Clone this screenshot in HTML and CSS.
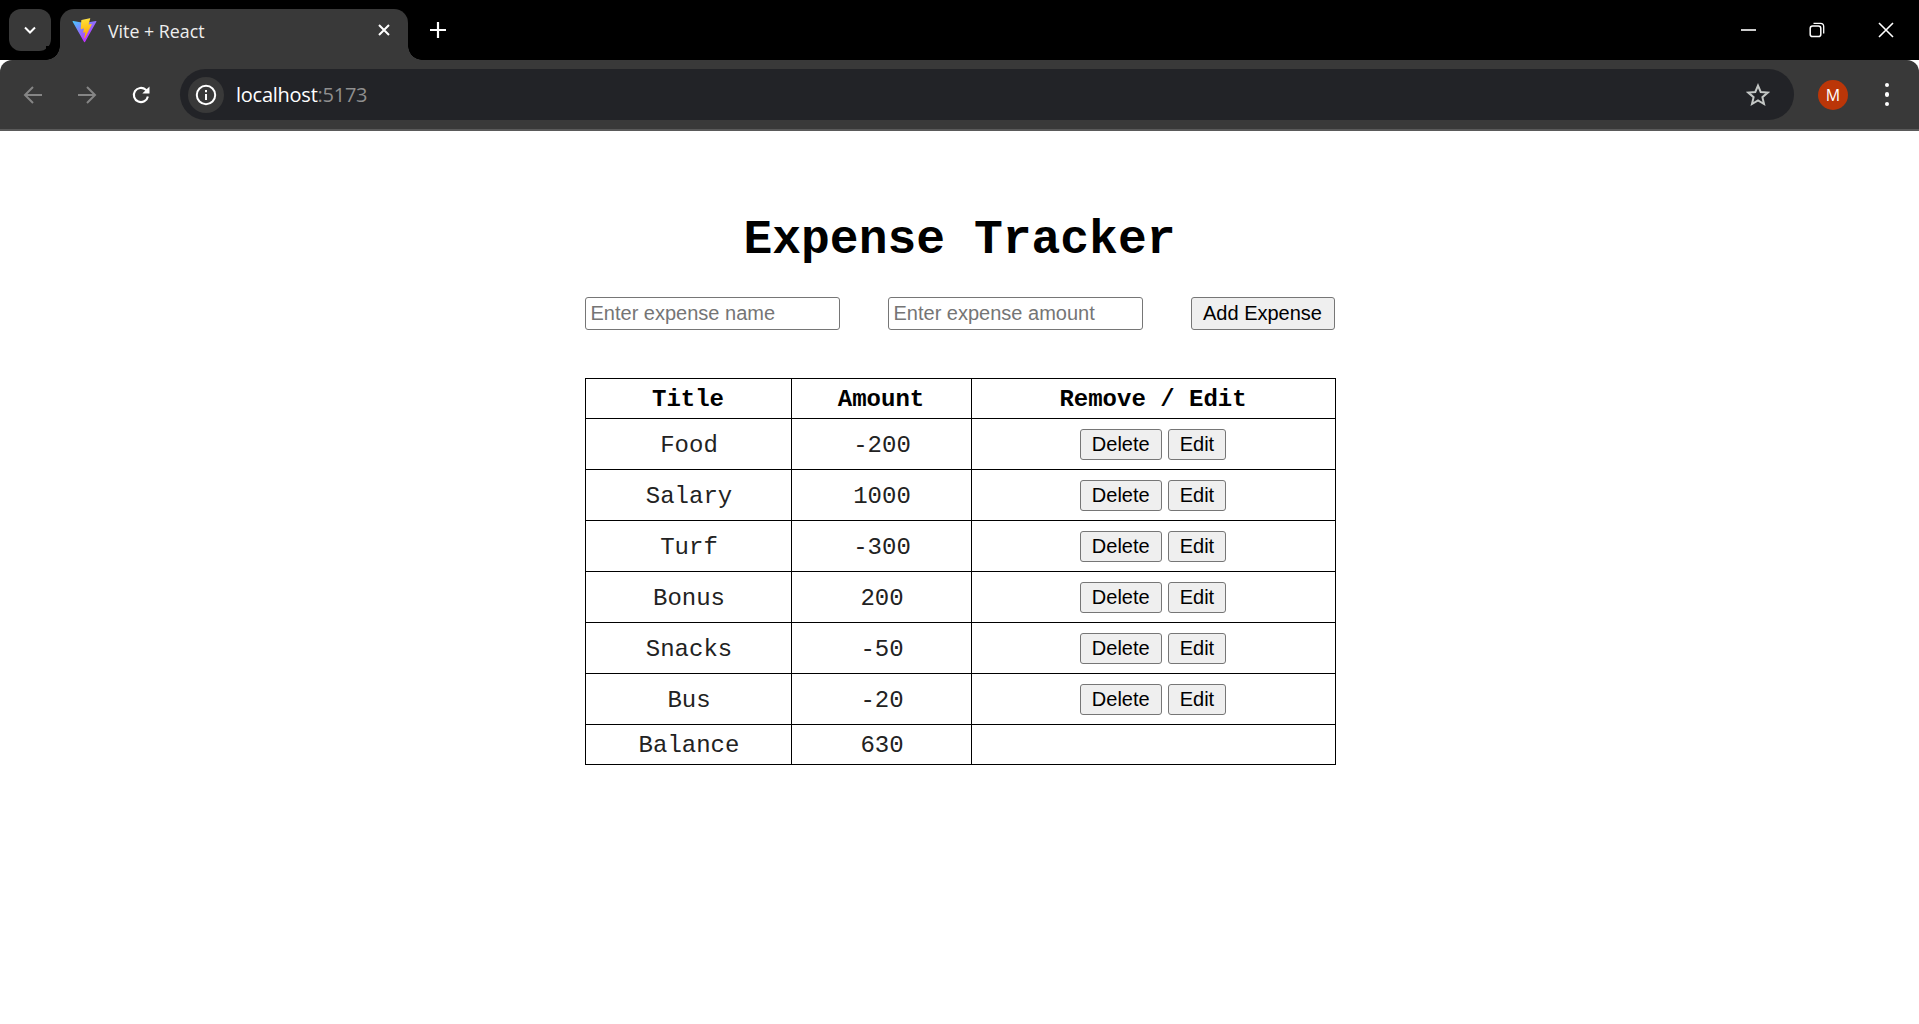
FILE: index.html
```
<!DOCTYPE html>
<html lang="en">
<head>
<meta charset="utf-8">
<title>Vite + React</title>
<link rel="stylesheet" href="styles.css">
</head>
<body>
<header class="browser">
  <div class="tabstrip">
    <div class="tabsearch">
      <svg width="14" height="14" viewBox="0 0 14 14"><path d="M2 4.5 7 9.5 12 4.5" fill="none" stroke="#fff" stroke-width="2"/></svg>
    </div>
    <div class="tab">
      <svg class="favicon" width="25" height="25" viewBox="0 0 410 404">
        <defs>
          <linearGradient id="vg1" x1="6" y1="33" x2="235" y2="344" gradientUnits="userSpaceOnUse"><stop offset="0" stop-color="#41D1FF"/><stop offset="1" stop-color="#BD34FE"/></linearGradient>
          <linearGradient id="vg2" x1="194" y1="8" x2="236" y2="293" gradientUnits="userSpaceOnUse"><stop offset="0" stop-color="#FFEA83"/><stop offset=".08" stop-color="#FFDD35"/><stop offset="1" stop-color="#FFA800"/></linearGradient>
        </defs>
        <path fill="url(#vg1)" d="M399.641 59.5246L215.643 388.545C211.844 395.338 202.084 395.378 198.228 388.618L10.5817 59.5563C6.38087 52.1896 12.6802 43.2665 21.0281 44.7586L205.223 77.6824C206.398 77.8924 207.601 77.8904 208.776 77.6763L389.119 44.8058C397.439 43.2894 403.768 52.1434 399.641 59.5246Z"/>
        <path fill="url(#vg2)" d="M292.965 1.5744L156.801 28.2552C154.563 28.6937 152.906 30.5903 152.771 32.8664L144.395 174.33C144.198 177.662 147.258 180.248 150.51 179.498L188.42 170.749C191.967 169.931 195.172 173.055 194.443 176.622L183.18 231.775C182.422 235.487 185.907 238.661 189.532 237.56L212.947 230.446C216.577 229.344 220.065 232.527 219.297 236.242L201.398 322.875C200.278 328.294 207.486 331.249 210.492 326.603L212.5 323.5L323.454 102.072C325.312 98.3645 322.108 94.137 318.036 94.9228L279.014 102.454C275.347 103.161 272.227 99.746 273.262 96.1583L298.731 7.86689C299.767 4.27314 296.636 0.855181 292.965 1.5744Z"/>
      </svg>
      <span class="tabtitle">Vite + React</span>
      <svg class="tabclose" width="14" height="14" viewBox="0 0 14 14"><path d="M2 2 12 12M12 2 2 12" stroke="#fff" stroke-width="2"/></svg>
    </div>
    <svg class="newtab" width="18" height="18" viewBox="0 0 18 18"><path d="M9 1V17M1 9H17" stroke="#fff" stroke-width="2.2"/></svg>
    <div class="winctrls">
      <svg width="16" height="16" viewBox="0 0 16 16"><path d="M1 8H16" stroke="#fff" stroke-width="1.6"/></svg>
      <svg width="16" height="16" viewBox="0 0 16 16"><rect x="1.2" y="4" width="10.6" height="10.6" rx="2.4" fill="none" stroke="#fff" stroke-width="1.5"/><path d="M4.5 1.4H11.5A3.2 3.2 0 0 1 14.7 4.6V11.5" fill="none" stroke="#fff" stroke-width="1.3"/></svg>
      <svg width="16" height="16" viewBox="0 0 16 16"><path d="M1 1 15 15M15 1 1 15" stroke="#fff" stroke-width="1.6"/></svg>
    </div>
  </div>
  <div class="toolbar">
    <div class="navs">
      <svg width="20" height="20" viewBox="0 0 20 20"><path d="M19 10H2M10 2 2 10 10 18" fill="none" stroke="#858585" stroke-width="2"/></svg>
      <svg width="20" height="20" viewBox="0 0 20 20"><path d="M1 10H18M10 2 18 10 10 18" fill="none" stroke="#858585" stroke-width="2"/></svg>
      <svg width="20" height="20" viewBox="0 0 20 20"><path d="M16.9 11.5A7.1 7.1 0 1 1 14.8 4.8L17.2 7" fill="none" stroke="#fff" stroke-width="2.1"/><path d="M18.5 1.4V8.6H11.3Z" fill="#fff"/></svg>
    </div>
    <div class="omnibox">
      <div class="infochip">
        <svg width="22" height="22" viewBox="0 0 22 22"><circle cx="11" cy="11" r="9.2" fill="none" stroke="#fff" stroke-width="2"/><path d="M11 10V16M11 6V8.2" stroke="#fff" stroke-width="2"/></svg>
      </div>
      <div class="url"><span class="host">localhost</span><span class="port">:5173</span></div>
      <svg class="star" width="24" height="24" viewBox="0 0 24 24"><path d="M12 2.6 14.7 9 21.7 9.6 16.4 14.2 18 21 12 17.4 6 21 7.6 14.2 2.3 9.6 9.3 9Z" fill="none" stroke="#c4c7c5" stroke-width="2"/></svg>
    </div>
    <div class="avatar">M</div>
    <div class="kebab"><i></i><i></i><i></i></div>
  </div>
</header>
<main class="app">
  <h1 class="title">Expense Tracker</h1>
  <form class="entry">
    <input class="field" type="text" placeholder="Enter expense name">
    <input class="field" type="text" placeholder="Enter expense amount">
    <button class="btn" type="button">Add Expense</button>
  </form>
  <table class="ledger">
    <colgroup><col class="col-title"><col class="col-amount"><col class="col-actions"></colgroup>
    <thead><tr><th>Title</th><th>Amount</th><th>Remove / Edit</th></tr></thead>
    <tbody>
      <tr class="item"><td>Food</td><td>-200</td><td><div class="actions"><button class="btn" type="button">Delete</button><button class="btn" type="button">Edit</button></div></td></tr>
      <tr class="item"><td>Salary</td><td>1000</td><td><div class="actions"><button class="btn" type="button">Delete</button><button class="btn" type="button">Edit</button></div></td></tr>
      <tr class="item"><td>Turf</td><td>-300</td><td><div class="actions"><button class="btn" type="button">Delete</button><button class="btn" type="button">Edit</button></div></td></tr>
      <tr class="item"><td>Bonus</td><td>200</td><td><div class="actions"><button class="btn" type="button">Delete</button><button class="btn" type="button">Edit</button></div></td></tr>
      <tr class="item"><td>Snacks</td><td>-50</td><td><div class="actions"><button class="btn" type="button">Delete</button><button class="btn" type="button">Edit</button></div></td></tr>
      <tr class="item"><td>Bus</td><td>-20</td><td><div class="actions"><button class="btn" type="button">Delete</button><button class="btn" type="button">Edit</button></div></td></tr>
      <tr class="total"><td>Balance</td><td>630</td><td></td></tr>
    </tbody>
  </table>
</main>
</body>
</html>
```
FILE: styles.css
```
* { box-sizing: border-box; }
html, body { margin: 0; height: 100%; background: #fff; }
body { overflow: hidden; }

.browser { font-family: "Open Sans", "Noto Sans", sans-serif; color: #fff; }

.tabstrip {
  height: 60px;
  background: #000;
  display: flex;
  align-items: flex-start;
  padding: 9px 0 0 9px;
}
.tabsearch {
  width: 42px;
  height: 42px;
  border-radius: 12px;
  background: #393939;
  display: flex;
  align-items: center;
  justify-content: center;
  margin-right: 9px;
}
.tab {
  position: relative;
  width: 348px;
  height: 51px;
  background: #393939;
  border-radius: 14px 14px 0 0;
  display: flex;
  align-items: flex-start;
  padding: 9px 17px 0 12px;
}
.tab::before, .tab::after {
  content: "";
  position: absolute;
  bottom: 0;
  width: 14px;
  height: 14px;
}
.tab::before { left: -14px; background: radial-gradient(circle at 0 0, #000 13.5px, #393939 14px); }
.tab::after { right: -14px; background: radial-gradient(circle at 100% 0, #000 13.5px, #393939 14px); }
.favicon { flex: none; }
.tabtitle { margin: 1px 0 0 11px; font-size: 17.8px; line-height: 24px; flex: 1; white-space: nowrap; color: #eee; }
.tabclose { margin-top: 5px; }
.newtab { margin: 12px 0 0 21px; }
.winctrls {
  margin-left: auto;
  display: flex;
  gap: 53px;
  padding: 13px 25px 0 0;
}

.toolbar {
  height: 71px;
  background: #393939;
  border-bottom: 2px solid #5a5a5a;
  border-radius: 12px 12px 0 0;
  display: flex;
  align-items: center;
}
.navs {
  display: flex;
  gap: 34px;
  padding-left: 23px;
  width: 180px;
}
.omnibox {
  width: 1614px;
  height: 51px;
  border-radius: 26px;
  background: #222327;
  display: flex;
  align-items: center;
  padding: 0 24px 0 8px;
}
.infochip {
  width: 36px;
  height: 36px;
  border-radius: 50%;
  background: #393939;
  display: flex;
  align-items: center;
  justify-content: center;
}
.url { margin-left: 12px; font-size: 20px; flex: 1; letter-spacing: -0.25px; }
.host { color: #fff; }
.port { color: #8f8f8f; }
.star { flex: none; }
.avatar {
  width: 30px;
  height: 30px;
  border-radius: 50%;
  margin-left: 24px;
  background: #bb3608;
  color: #fff;
  font-size: 16px;
  line-height: 30px;
  text-align: center;
  flex: none;
}
.kebab {
  display: flex;
  flex-direction: column;
  gap: 5px;
  margin-left: 37px;
}
.kebab i { width: 4.4px; height: 4.4px; border-radius: 50%; background: #fff; display: block; }

.app {
  width: 750px;
  margin: 0 auto;
}
.title {
  margin: 0;
  padding-top: 85px;
  height: 166px;
  font: bold 48px/1 "Liberation Mono", monospace;
  text-align: center;
  color: #000;
}
.entry {
  display: flex;
  justify-content: space-between;
  align-items: stretch;
  height: 33px;
}
.field {
  width: 255px;
  height: 33px;
  padding: 1px 5px;
  font: 20px "Liberation Sans", Arial, sans-serif;
  border: 1px solid #767676;
  border-radius: 3px;
  background: #fff;
}
.field::placeholder { color: #757575; opacity: 1; }
.btn {
  font: 20px/23px "Liberation Sans", Arial, sans-serif;
  padding: 3px 11px;
  color: #000;
  background: #efefef;
  border: 1px solid #767676;
  border-radius: 3px;
}
.entry .btn { width: 144px; }

.ledger {
  margin-top: 48px;
  width: 750px;
  table-layout: fixed;
  border-collapse: collapse;
  font: 24px/27px "Liberation Mono", monospace;
  color: #222;
}
.col-title { width: 206px; }
.col-amount { width: 180px; }
.col-actions { width: 364px; }
.ledger th, .ledger td {
  border: 1px solid #000;
  padding: 7px 0 5px;
  height: 40px;
  text-align: center;
}
.ledger th { font-weight: bold; color: #000; }
.item td { height: 51px; padding: 3px 0 0; }
.ledger td:not(:last-child) { padding-left: 2px; }
.actions { display: flex; justify-content: center; gap: 6px; margin-top: -3px; }
.actions .btn { height: 31px; }
```
